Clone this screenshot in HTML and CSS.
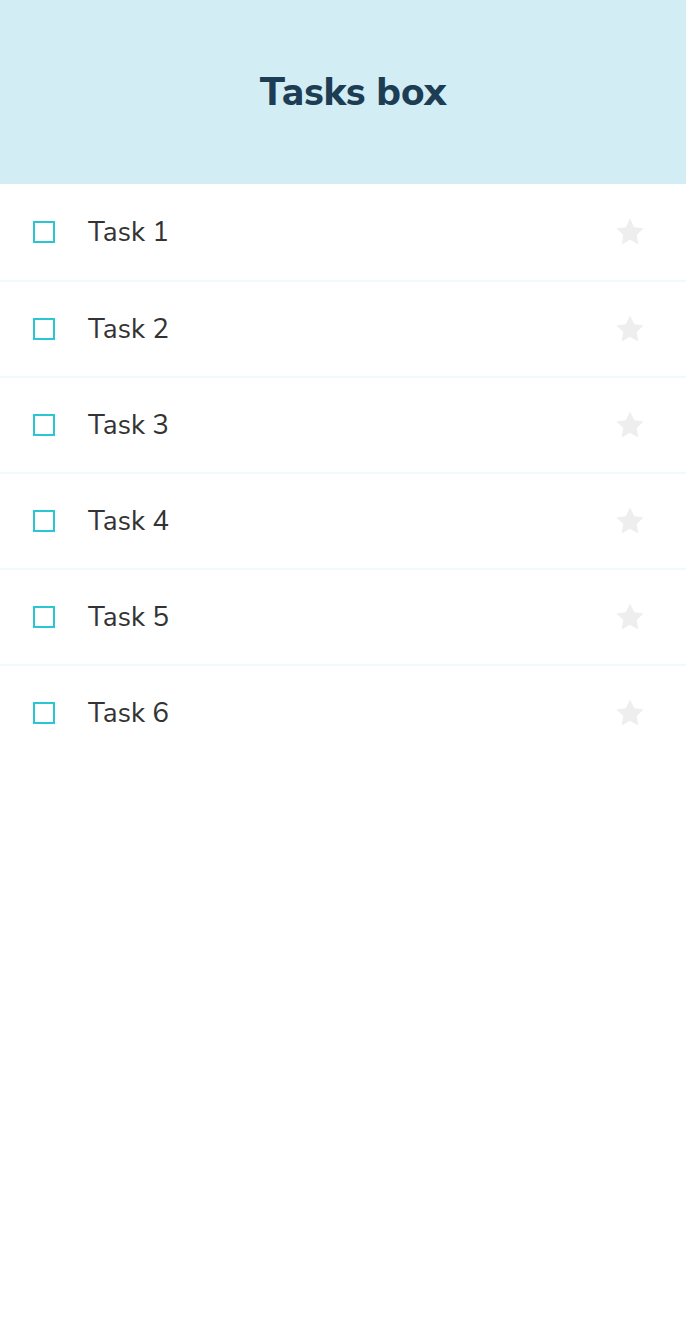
FILE: index.html
```html
<!DOCTYPE html>
<html>
<head>
<meta charset="utf-8">
<link rel="stylesheet" href="styles.css">
</head>
<body>
<div class="page">
  <header class="nav">
    <h1 class="title">Tasks box</h1>
  </header>
  <div class="list">
    <div class="item"><span class="check"></span><span class="name">Task 1</span><svg class="star" viewBox="0 0 24 24"><path d="M12 1.8l3.1 6.6 7.1.9-5.2 4.9 1.3 7.1L12 17.8l-6.3 3.5 1.3-7.1-5.2-4.9 7.1-.9z"/></svg></div>
    <div class="item"><span class="check"></span><span class="name">Task 2</span><svg class="star" viewBox="0 0 24 24"><path d="M12 1.8l3.1 6.6 7.1.9-5.2 4.9 1.3 7.1L12 17.8l-6.3 3.5 1.3-7.1-5.2-4.9 7.1-.9z"/></svg></div>
    <div class="item"><span class="check"></span><span class="name">Task 3</span><svg class="star" viewBox="0 0 24 24"><path d="M12 1.8l3.1 6.6 7.1.9-5.2 4.9 1.3 7.1L12 17.8l-6.3 3.5 1.3-7.1-5.2-4.9 7.1-.9z"/></svg></div>
    <div class="item"><span class="check"></span><span class="name">Task 4</span><svg class="star" viewBox="0 0 24 24"><path d="M12 1.8l3.1 6.6 7.1.9-5.2 4.9 1.3 7.1L12 17.8l-6.3 3.5 1.3-7.1-5.2-4.9 7.1-.9z"/></svg></div>
    <div class="item"><span class="check"></span><span class="name">Task 5</span><svg class="star" viewBox="0 0 24 24"><path d="M12 1.8l3.1 6.6 7.1.9-5.2 4.9 1.3 7.1L12 17.8l-6.3 3.5 1.3-7.1-5.2-4.9 7.1-.9z"/></svg></div>
    <div class="item"><span class="check"></span><span class="name">Task 6</span><svg class="star" viewBox="0 0 24 24"><path d="M12 1.8l3.1 6.6 7.1.9-5.2 4.9 1.3 7.1L12 17.8l-6.3 3.5 1.3-7.1-5.2-4.9 7.1-.9z"/></svg></div>
  </div>
</div>
</body>
</html>
```
FILE: styles.css
```css
* { box-sizing: border-box; }
html, body { margin: 0; padding: 0; background: #fff; }
body { font-family: "Nunito Sans", "Lato", "Open Sans", sans-serif; }
.nav {
  height: 184px;
  background: #d3edf4;
  display: flex;
  align-items: center;
  justify-content: center;
  padding-left: 20px;
}
.title {
  margin: 0;
  font-size: 40px;
  font-weight: 800;
  color: #1d3d54;
}
.list { display: flex; flex-direction: column; }
.item {
  height: 96px;
  display: flex;
  align-items: center;
  border-top: 2px solid #f0f9fb;
  padding: 0 40px 0 33px;
}
.item:first-child { border-top: none; }
.check {
  width: 22px;
  height: 22px;
  border: 2px solid #2cc5d2;
  flex: none;
}
.name {
  margin-left: 33px;
  font-size: 28px;
  color: #333;
  flex: 1;
}
.star {
  width: 32px;
  height: 32px;
  fill: #eee;
  flex: none;
}
```
